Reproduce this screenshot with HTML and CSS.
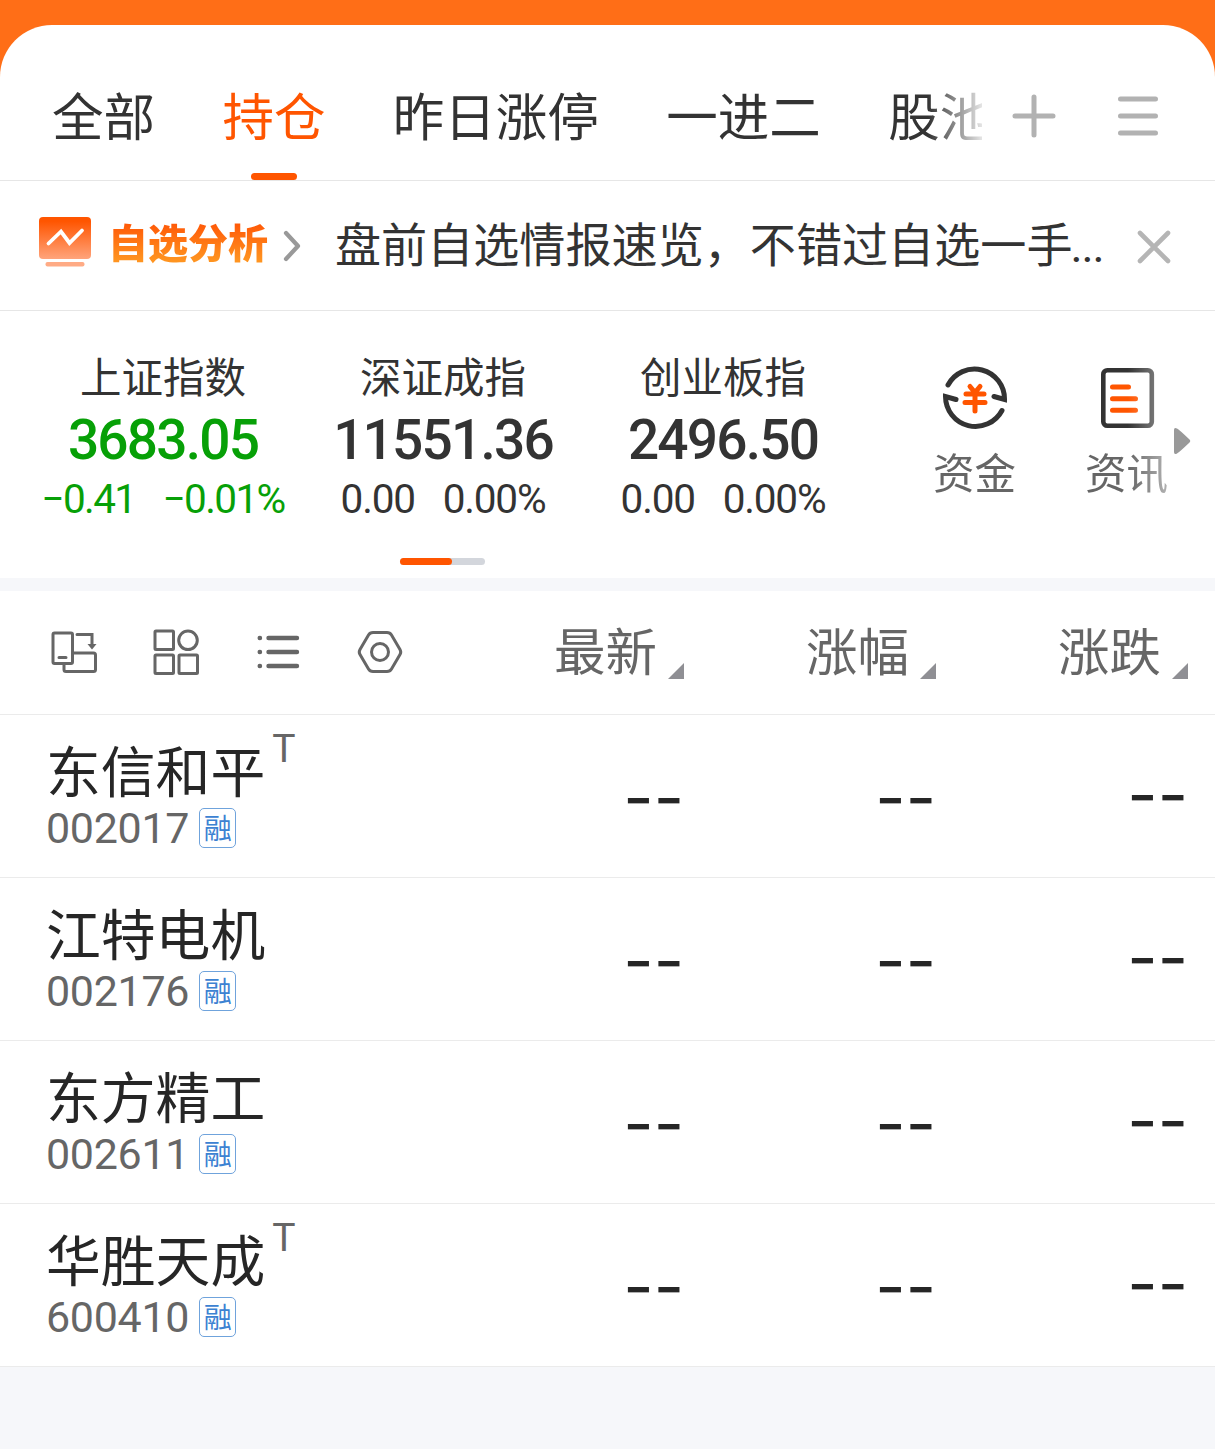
FILE: index.html
```html
<!DOCTYPE html>
<html lang="zh-CN">
<head>
    <meta charset="UTF-8">
    <meta name="viewport" content="width=device-width, initial-scale=1.0">
    <title>自选</title>
    <link rel="stylesheet" href="styles.css">
</head>
<body>
    <header class="top">
        <nav class="tabs">
            <div class="tab-list">
                <a class="tab">全部</a>
                <a class="tab active">持仓</a>
                <a class="tab">昨日涨停</a>
                <a class="tab">一进二</a>
                <a class="tab">股池</a>
            </div>
            <svg class="tab-icon" width="44" height="44" viewBox="0 0 44 44">
                <path d="M22 3V41M3 22H41"/>
            </svg>
            <svg class="tab-icon menu-icon" width="44" height="44" viewBox="0 0 44 44">
                <path d="M4.500 5H39.500M4.500 22H39.500M4.500 39H39.500"/>
            </svg>
        </nav>
    </header>

    <section class="banner">
        <svg class="banner-logo" width="52" height="50" viewBox="0 0 52 50">
            <defs>
                <linearGradient id="logo-fill" x1="0" y1="0" x2="0" y2="1">
                    <stop offset="0.1" stop-color="#ff5500"/>
                    <stop offset="1" stop-color="#ffa47c"/>
                </linearGradient>
            </defs>
            <rect x="0" y="0" width="52" height="42" rx="4" fill="url(#logo-fill)"/>
            <rect x="6.500" y="45" width="39" height="4.500" rx="2" fill="#ffab85"/>
            <path d="M9.500 26.500L22 14.500L30.500 26L43 13.500" fill="none" stroke="#fff" stroke-width="3.800" stroke-linecap="round"/>
        </svg>
        <span class="banner-title">自选分析</span>
        <svg class="banner-arrow" width="18" height="32" viewBox="0 0 18 32">
            <path d="M3 3L15 16L3 29"/>
        </svg>
        <span class="banner-text">盘前自选情报速览，不错过自选一手<span class="dots">...</span></span>
        <svg class="banner-close" width="36" height="36" viewBox="0 0 36 36">
            <path d="M4 4L32 32M32 4L4 32"/>
        </svg>
    </section>

    <section class="market">
        <div class="index-list">
            <div class="index down">
                <div class="index-name">上证指数</div>
                <div class="index-value">3683.05</div>
                <div class="index-change"><span>−0.41</span><span>−0.01%</span></div>
            </div>
            <div class="index">
                <div class="index-name">深证成指</div>
                <div class="index-value">11551.36</div>
                <div class="index-change"><span>0.00</span><span>0.00%</span></div>
            </div>
            <div class="index">
                <div class="index-name">创业板指</div>
                <div class="index-value">2496.50</div>
                <div class="index-change"><span>0.00</span><span>0.00%</span></div>
            </div>
            <div class="pager"><div class="pager-on"></div></div>
        </div>
        <div class="shortcuts">
            <div class="shortcut">
                <svg width="66" height="66" viewBox="0 0 66 66">
                    <g fill="none" stroke="#333" stroke-width="5" stroke-linecap="round">
                        <path d="M6 20A30 30 0 0 1 62.500 34.500L52 31.500"/>
                        <path d="M60 45.500A30 30 0 0 1 3.500 31.500L14 34.500"/>
                    </g>
                    <path d="M28 21.500L33 27.500L38 21.500M24 29H42M23 37.500H43M33 28V46" fill="none" stroke="#ff5500" stroke-width="5" stroke-linecap="round"/>
                </svg>
                <span>资金</span>
            </div>
            <div class="shortcut">
                <svg width="66" height="66" viewBox="0 0 66 66">
                    <rect x="9.300" y="5.300" width="48.500" height="55.500" rx="4" fill="none" stroke="#333" stroke-width="4.600"/>
                    <path d="M18.500 22H34.500M18.500 33.800H41.500M18.500 45.300H41.500" fill="none" stroke="#ff5500" stroke-width="5" stroke-linecap="round"/>
                </svg>
                <span>资讯</span>
            </div>
        </div>
        <svg class="more-arrow" width="17" height="28" viewBox="0 0 17 28">
            <path d="M0 3Q0 0 3 1.500Q5 2.500 15 12Q17.500 14 15 16Q5 25.500 3 26.500Q0 28 0 25Z"/>
        </svg>
    </section>

    <section class="stocks">
        <div class="row head">
            <div class="tools">
                <svg width="50" height="50" viewBox="0 0 50 50">
                    <rect x="3" y="5" width="19.500" height="30.500" rx="1.500"/>
                    <path d="M9 29.500H16M27 6.500H42V17M22.500 25H43.500Q45.500 25 45.500 27V41.500Q45.500 43.500 43.500 43.500H16Q14 43.500 14 41.500V36"/>
                    <path class="solid" d="M37.500 16H46.500L42 21.500Z"/>
                </svg>
                <svg width="50" height="50" viewBox="0 0 50 50">
                    <rect x="3" y="3" width="18.500" height="18.500" rx="1"/>
                    <circle cx="36" cy="12.300" r="9.300"/>
                    <rect x="3" y="27" width="18.500" height="18.500" rx="1"/>
                    <rect x="27" y="27" width="18.500" height="18.500" rx="1"/>
                </svg>
                <svg class="list-icon" width="50" height="50" viewBox="0 0 50 50">
                    <path d="M5.700 10H6M5.700 24H6M5.700 38H6M14.500 10H43M14.500 24H43M14.500 38H43"/>
                </svg>
                <svg width="50" height="50" viewBox="0 0 50 50">
                    <path d="M17 4.500H31Q34 4.500 35.500 7L44 21.500Q45.500 24 44 26.500L35.500 41Q34 43.500 31 43.500H17Q14 43.500 12.500 41L4 26.500Q2.500 24 4 21.500L12.500 7Q14 4.500 17 4.500Z"/>
                    <circle cx="24" cy="24" r="8.500"/>
                </svg>
            </div>
            <div class="col-head">最新<i class="sort"></i></div>
            <div class="col-head">涨幅<i class="sort"></i></div>
            <div class="col-head">涨跌<i class="sort"></i></div>
        </div>
        <div class="row">
            <div class="stock">
                <div class="stock-name">东信和平<sup>T</sup></div>
                <div class="stock-code">002017<span class="badge">融</span></div>
            </div>
            <div class="value">--</div>
            <div class="value">--</div>
            <div class="value last">--</div>
        </div>
        <div class="row">
            <div class="stock">
                <div class="stock-name">江特电机</div>
                <div class="stock-code">002176<span class="badge">融</span></div>
            </div>
            <div class="value">--</div>
            <div class="value">--</div>
            <div class="value last">--</div>
        </div>
        <div class="row">
            <div class="stock">
                <div class="stock-name">东方精工</div>
                <div class="stock-code">002611<span class="badge">融</span></div>
            </div>
            <div class="value">--</div>
            <div class="value">--</div>
            <div class="value last">--</div>
        </div>
        <div class="row">
            <div class="stock">
                <div class="stock-name">华胜天成<sup>T</sup></div>
                <div class="stock-code">600410<span class="badge">融</span></div>
            </div>
            <div class="value">--</div>
            <div class="value">--</div>
            <div class="value last">--</div>
        </div>
    </section>
</body>
</html>
```
FILE: styles.css
```css
* {
    box-sizing: border-box;
}
body {
    margin: 0;
    background: #f6f7fa;
    color: #333;
    font-family: "Noto Sans CJK SC", sans-serif;
    overflow: hidden;
}
svg {
    display: block;
    flex: none;
}

/* tabs */
.top {
    background: #ff6e17;
    padding-top: 25px;
}
.tabs {
    display: flex;
    height: 156px;
    padding-left: 52px;
    background: #fff;
    border-radius: 52px 52px 0 0;
    border-bottom: 1px solid #e6e6e6;
}
.tab-list {
    display: flex;
    gap: 67.400px;
    width: 930px;
    overflow: hidden;
    -webkit-mask-image: linear-gradient(to right, #000 876px, transparent 938px);
    mask-image: linear-gradient(to right, #000 876px, transparent 938px);
}
.tab {
    display: flex;
    flex: none;
    flex-direction: column;
    align-items: center;
    justify-content: space-between;
    font-size: 51.500px;
    line-height: 76px;
    padding-top: 51px;
    white-space: nowrap;
}
.tab.active {
    color: #ff5500;
}
.tab.active::after {
    content: "";
    width: 46px;
    height: 7px;
    border-radius: 3.500px;
    background: #ff5500;
}
.tab-icon {
    margin: 69px 0 0 30px;
    fill: none;
    stroke: #b2b2b2;
    stroke-width: 5;
    stroke-linecap: round;
}
.menu-icon {
    margin-left: 60px;
}

/* banner */
.banner {
    display: flex;
    align-items: center;
    height: 130px;
    padding: 0 43px 0 39px;
    background: #fff;
    border-bottom: 1px solid #e6e6e6;
}
.banner-logo {
    margin-top: -7px;
}
.banner-title {
    margin: -9px 0 0 17px;
    font-size: 40px;
    font-weight: 900;
    line-height: 56px;
    background: linear-gradient(to bottom, #ff5a08 20%, #ff9420 85%);
    -webkit-background-clip: text;
    background-clip: text;
    color: transparent;
}
.banner-arrow {
    margin: 1px 0 0 15px;
    fill: none;
    stroke: #999;
    stroke-width: 4.200;
    stroke-linecap: round;
    stroke-linejoin: round;
}
.banner-text {
    flex: 1;
    margin: -4px 0 0 34px;
    font-size: 46.100px;
    line-height: 64px;
    white-space: nowrap;
}
.dots {
    margin-left: -2px;
    font-family: Roboto, sans-serif;
    letter-spacing: -1.200px;
}
.banner-close {
    margin-top: 3px;
    fill: none;
    stroke: #b5b5b5;
    stroke-width: 4.600;
    stroke-linecap: round;
}

/* market indexes */
.market {
    display: flex;
    height: 280px;
    padding-left: 23px;
    background: #fff;
    border-bottom: 13px solid #f6f7fa;
}
.index-list {
    display: grid;
    grid-template-columns: repeat(3, 280px);
    align-content: start;
    padding-top: 36px;
    text-align: center;
}
.index-name {
    font-size: 41.500px;
    line-height: 56px;
}
.index-value {
    font-family: Roboto, sans-serif;
    font-size: 55px;
    font-weight: 500;
    line-height: 74px;
    letter-spacing: -1.800px;
}
.index-change {
    display: flex;
    justify-content: center;
    gap: 28px;
    font-family: Roboto, sans-serif;
    font-size: 40.500px;
    line-height: 45px;
    letter-spacing: -1.200px;
}
.down .index-change {
    gap: 27px;
    letter-spacing: -1.600px;
}
.down .index-value,
.down .index-change {
    color: #07a007;
}
.pager {
    grid-column: 1 / 4;
    justify-self: center;
    width: 85px;
    height: 7px;
    margin: 36px 1px 0 0;
    border-radius: 4px;
    background: #d3d6dc;
}
.pager-on {
    width: 52px;
    height: 7px;
    border-radius: 4px;
    background: #ff5500;
}
.shortcuts {
    display: flex;
    gap: 69px;
    width: 305px;
    padding: 54px 0 0 70px;
    overflow: hidden;
    -webkit-mask-image: linear-gradient(to right, #000 265px, rgba(0, 0, 0, 0.5) 305px);
    mask-image: linear-gradient(to right, #000 265px, rgba(0, 0, 0, 0.5) 305px);
}
.shortcut {
    display: flex;
    flex: none;
    flex-direction: column;
    align-items: center;
    color: #666;
    font-size: 41.500px;
    line-height: 56px;
}
.shortcut span {
    margin-top: 12px;
}
.more-arrow {
    margin: 116px 0 0 6px;
    fill: #999;
}

/* stock list */
.stocks {
    background: #fff;
}
.row {
    display: grid;
    grid-template-columns: 1fr repeat(3, 252px);
    height: 163px;
    padding-right: 27px;
    border-bottom: 1px solid #ebebeb;
}
.head {
    height: 124px;
    color: #666;
}
.tools {
    display: flex;
    gap: 52px;
    padding: 37px 0 0 50px;
}
.tools svg {
    fill: none;
    stroke: #666;
    stroke-width: 3;
    stroke-linecap: round;
}
.tools .solid {
    fill: #666;
    stroke: none;
}
.tools .list-icon {
    stroke-width: 4.400;
}
.col-head {
    display: flex;
    justify-content: flex-end;
    gap: 11px;
    font-size: 51.500px;
    line-height: 76px;
    padding-top: 20px;
}
.sort {
    width: 16px;
    height: 16px;
    margin-top: 52px;
    background: #8f8f94;
    clip-path: polygon(100% 0, 100% 100%, 0 100%);
}
.stock {
    padding: 15px 0 0 46px;
    white-space: nowrap;
}
.stock-name {
    display: flex;
    color: #262626;
    font-size: 54.800px;
    line-height: 76px;
}
.stock-name sup {
    margin: -5px 0 0 7px;
    color: #666;
    font-family: Roboto, sans-serif;
    font-size: 39px;
    line-height: 48px;
}
.stock-code {
    display: flex;
    align-items: center;
    gap: 10px;
    height: 44px;
    color: #666;
    font-family: Roboto, sans-serif;
    font-size: 43px;
    line-height: 42px;
    letter-spacing: -0.300px;
}
.badge {
    width: 37px;
    height: 40px;
    border: 1.500px solid #6fa3dc;
    border-radius: 5px;
    color: #3c82d2;
    font-family: "Noto Sans CJK SC", sans-serif;
    font-size: 28px;
    line-height: 36px;
    letter-spacing: 0;
    text-align: center;
}
.value {
    padding: 44px 0 0;
    color: #262626;
    font-family: Inter, sans-serif;
    font-size: 66px;
    line-height: 76px;
    text-align: right;
}
.value.last {
    padding-top: 41px;
}
```
